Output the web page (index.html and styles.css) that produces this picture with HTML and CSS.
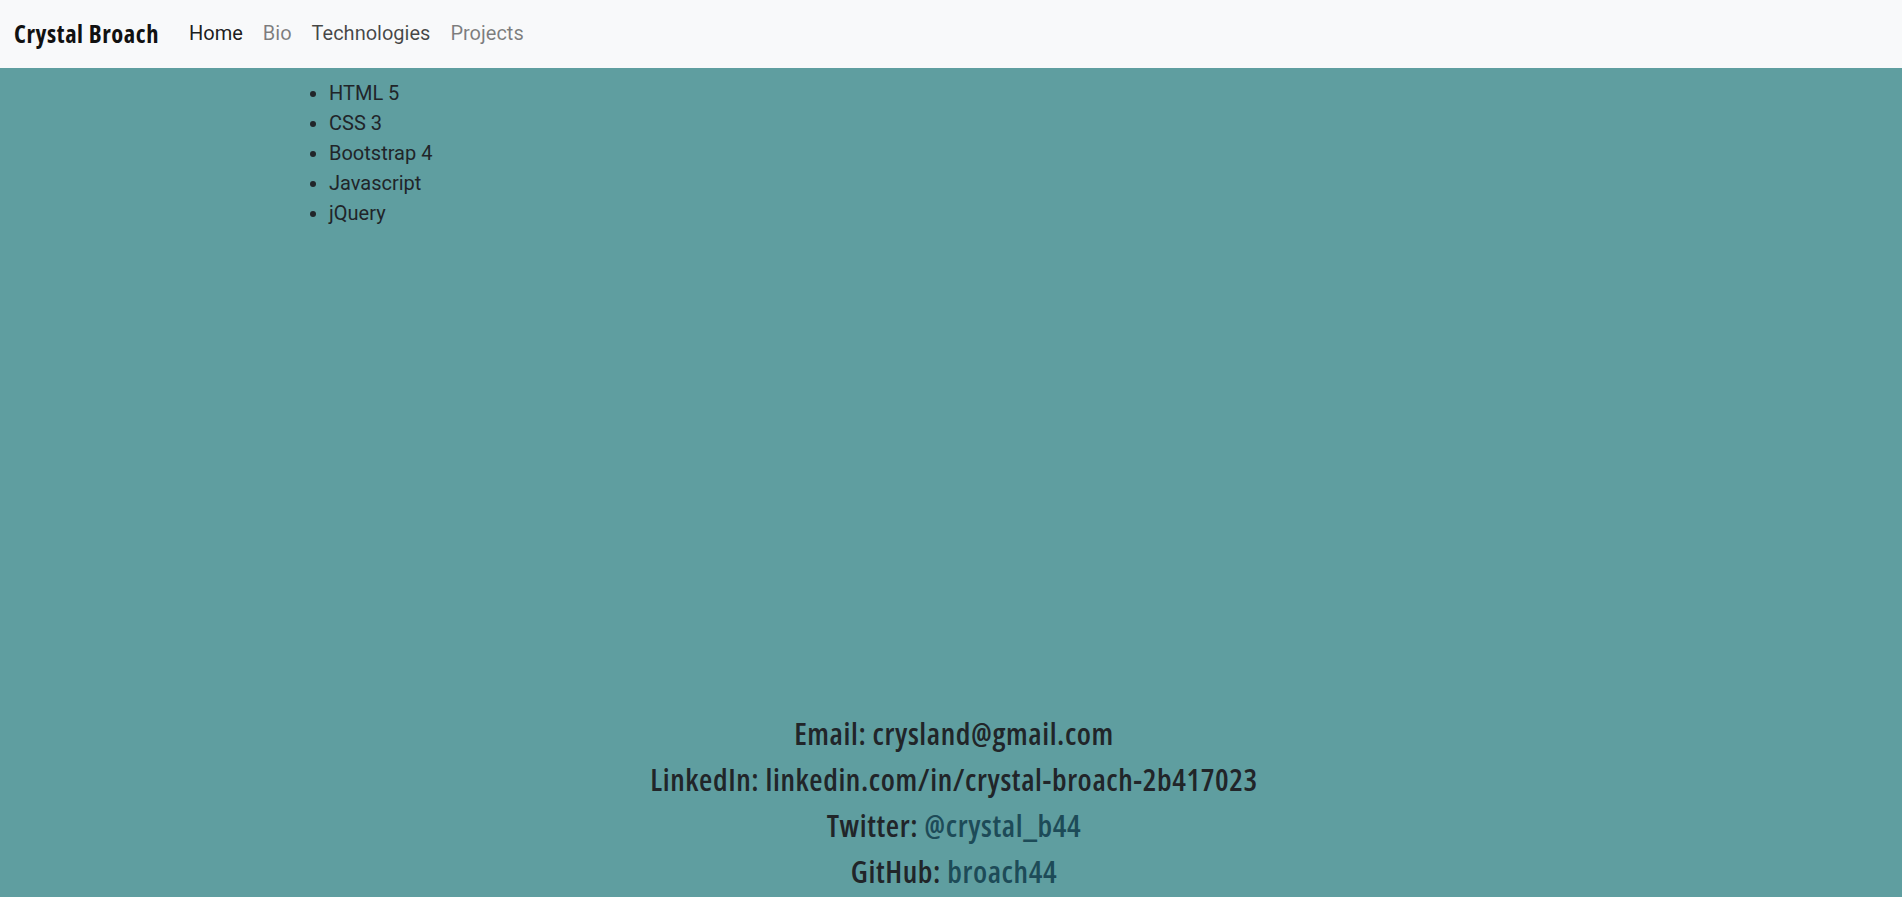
FILE: index.html
```html
<!DOCTYPE html>
<html lang="en">
<head>
<meta charset="utf-8">
<title>Crystal Broach</title>
<link rel="stylesheet" href="styles.css">
</head>
<body>
<nav class="navbar">
  <a class="brand" href="#">Crystal Broach</a>
  <a class="nav-link active" href="#">Home</a>
  <a class="nav-link" href="#">Bio</a>
  <a class="nav-link focus" href="#">Technologies</a>
  <a class="nav-link" href="#">Projects</a>
</nav>
<main class="main">
  <ul class="tech-list">
    <li>HTML 5</li>
    <li>CSS 3</li>
    <li>Bootstrap 4</li>
    <li>Javascript</li>
    <li>jQuery</li>
  </ul>
</main>
<footer class="contact">
  <div class="contact-line">Email: crysland@gmail.com</div>
  <div class="contact-line">LinkedIn: linkedin.com/in/crystal-broach-2b417023</div>
  <div class="contact-line">Twitter: <a class="contact-link" href="#">@crystal_b44</a></div>
  <div class="contact-line">GitHub: <a class="contact-link" href="#">broach44</a></div>
</footer>
</body>
</html>
```
FILE: styles.css
```css
html, body {
  margin: 0;
  padding: 0;
}
body {
  background: #5f9ea0;
  font-family: Roboto, "Liberation Sans", sans-serif;
  color: #212529;
  height: 897px;
  overflow: hidden;
}
.navbar {
  height: 68px;
  background: #f8f9fa;
  display: flex;
  align-items: center;
  padding-left: 14px;
  padding-bottom: 2px;
  box-sizing: border-box;
}
.brand {
  font-family: "Open Sans", sans-serif;
  font-weight: 700;
  font-stretch: 75%;
  font-size: 24.5px;
  letter-spacing: 0.6px;
  color: #111;
  text-decoration: none;
  margin-right: 20px;
}
.nav-link {
  font-size: 20px;
  padding: 0 10px;
  color: rgba(0, 0, 0, 0.5);
  text-decoration: none;
}
.nav-link.active {
  color: rgba(0, 0, 0, 0.9);
}
.nav-link.focus {
  color: rgba(0, 0, 0, 0.72);
}
.main {
  height: 631.5px;
}
.tech-list {
  margin: 10px 0 0 281px;
  padding-left: 48px;
  font-size: 20px;
  line-height: 30px;
}
.contact {
  text-align: center;
  padding-left: 6px;
}
.contact-line {
  font-family: "Open Sans", sans-serif;
  font-weight: 600;
  font-stretch: 75%;
  font-size: 30.5px;
  letter-spacing: 0.6px;
  line-height: 46.33px;
  color: #212529;
}
.contact-link {
  color: #1d4b58;
  text-decoration: none;
}
```
